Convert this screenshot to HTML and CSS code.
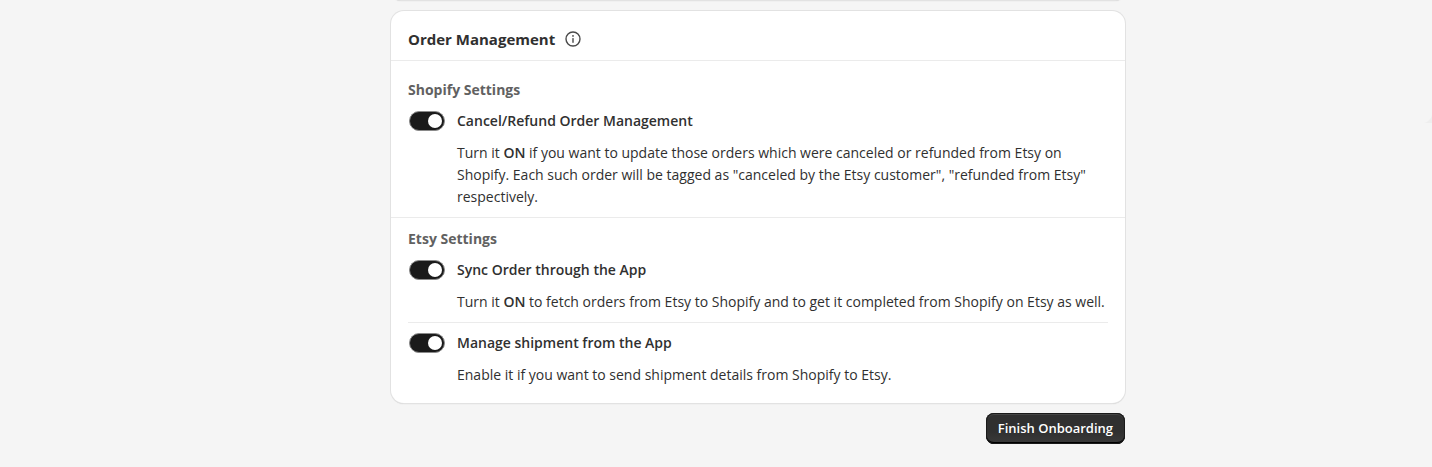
FILE: index.html
```html
<!DOCTYPE html>
<html lang="en">
<head>
<meta charset="utf-8">
<meta name="viewport" content="width=device-width, initial-scale=1">
<title>Order Management</title>
<link rel="stylesheet" href="styles.css">
</head>
<body>
<main class="page">
  <div class="content">
    <div class="card card-previous"></div>
    <section class="card">
      <header class="card-header">
        <h2 class="card-title">Order Management</h2>
        <svg class="info-icon" viewBox="0 0 16 16" fill="none" stroke="#4a4a4a" stroke-width="1.4" stroke-linecap="round" aria-hidden="true">
          <circle cx="8" cy="8" r="7"/>
          <path d="M8 7.6v3.6"/>
          <circle cx="8" cy="4.9" r="0.9" fill="#4a4a4a" stroke="none"/>
        </svg>
      </header>
      <div class="card-section">
        <h3 class="section-title">Shopify Settings</h3>
        <div class="setting">
          <input class="switch" type="checkbox" id="cancel-refund" checked>
          <label class="setting-label" for="cancel-refund">Cancel/Refund Order Management</label>
          <p class="setting-help">Turn it <b>ON</b> if you want to update those orders which were canceled or refunded from Etsy on Shopify. Each such order will be tagged as "canceled by the Etsy customer", "refunded from Etsy" respectively.</p>
        </div>
      </div>
      <div class="card-section card-section-tight">
        <h3 class="section-title">Etsy Settings</h3>
        <div class="setting">
          <input class="switch" type="checkbox" id="sync-order" checked>
          <label class="setting-label" for="sync-order">Sync Order through the App</label>
          <p class="setting-help">Turn it <b>ON</b> to fetch orders from Etsy to Shopify and to get it completed from Shopify on Etsy as well.</p>
        </div>
        <div class="setting setting-divided">
          <input class="switch" type="checkbox" id="manage-shipment" checked>
          <label class="setting-label" for="manage-shipment">Manage shipment from the App</label>
          <p class="setting-help">Enable it if you want to send shipment details from Shopify to Etsy.</p>
        </div>
      </div>
    </section>
    <div class="actions">
      <button class="button-primary" type="button">Finish Onboarding</button>
    </div>
  </div>
  <span class="corner-shape"></span>
</main>
</body>
</html>
```
FILE: styles.css
```css
* {
  box-sizing: border-box;
}

body {
  margin: 0;
  background: #f5f5f5;
  color: #303030;
  font-family: "Segoe UI", "Open Sans", "Noto Sans", sans-serif;
  font-size: 14px;
  line-height: 22px;
}

.page {
  position: relative;
  padding-left: 84px;
  overflow: hidden;
}

.content {
  max-width: 734px;
  margin: 0 auto;
}

.card {
  background: #fff;
  border-radius: 13px;
  box-shadow: 0 0 0 1px #e2e2e2, 0 1px 1px #c4c4c4;
}

.card-previous {
  height: 20px;
  margin-top: -20px;
  margin-bottom: 11px;
}

.card-header {
  display: flex;
  align-items: center;
  gap: 10px;
  padding: 17px 17px 10px;
}

.card-title,
.section-title {
  margin: 0;
  font-size: 14px;
  line-height: 22px;
  font-weight: 700;
}

.card-title {
  font-size: 15px;
}

.info-icon {
  width: 16px;
  height: 16px;
}

.card-section {
  padding: 18px 17px 9px;
  border-top: 1px solid #ebebeb;
}

.card-section-tight {
  padding-top: 10px;
  padding-bottom: 17px;
}

.section-title {
  color: #616161;
}

.setting {
  display: grid;
  grid-template-columns: 36px 1fr;
  align-items: center;
  column-gap: 12px;
  row-gap: 10px;
  padding: 9px 0 9px 1px;
}

.card-section .setting:last-child {
  padding-bottom: 0;
}

.setting-divided {
  border-top: 1px solid #ebebeb;
}

.setting-label {
  font-weight: 600;
}

.setting-help {
  grid-column: 2;
  margin: 0;
}

.setting-help b {
  font-weight: 600;
}

.switch {
  appearance: none;
  display: flex;
  align-items: center;
  width: 36px;
  height: 20px;
  margin: 0;
  padding: 2px;
  border: 1px solid #8a8a8a;
  border-radius: 10px;
  background: #1a1a1a;
}

.switch::before {
  content: "";
  width: 14px;
  height: 14px;
  border-radius: 50%;
  background: #fff;
}

.switch:checked {
  justify-content: flex-end;
}

.actions {
  display: flex;
  justify-content: flex-end;
  padding: 10px 0 23px;
}

.button-primary {
  padding: 4px 12px;
  border: 0;
  border-radius: 8px;
  background: linear-gradient(#303030 60%, #3a3a3a);
  box-shadow: inset 0 0 0 1px #1a1a1a, inset 0 2px 0 #454545, inset 0 -2px 0 #000;
  color: #fff;
  font: 600 13px/23px "Segoe UI", "Open Sans", "Noto Sans", sans-serif;
}

.corner-shape {
  position: absolute;
  top: 112px;
  right: 0;
  width: 11px;
  height: 11px;
  background: radial-gradient(circle at 0 0, transparent 11px, #eeeeee 12px);
}
```
